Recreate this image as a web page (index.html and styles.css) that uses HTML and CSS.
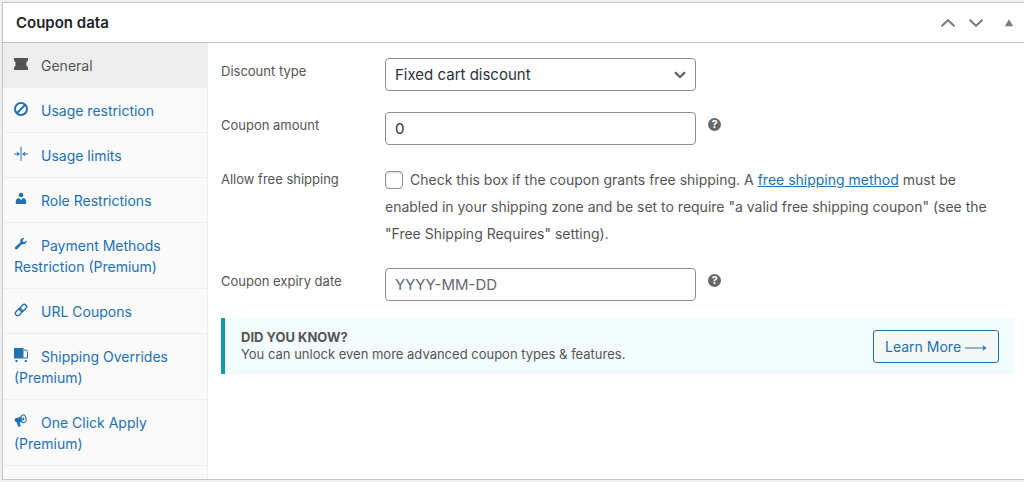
FILE: index.html
```html
<!DOCTYPE html>
<html lang="en">
<head>
<meta charset="utf-8">
<title>Coupon data</title>
<link rel="stylesheet" href="styles.css">
</head>
<body>
<section class="postbox">
  <header class="postbox-header">
    <h2 class="title">Coupon data</h2>
    <div class="actions">
      <button class="action" type="button" aria-label="Move up"><svg width="16" height="10" viewBox="0 0 16 10"><path class="chevron" d="M1.500 8.200 8 2.200l6.500 6"/></svg></button>
      <button class="action" type="button" aria-label="Move down"><svg width="16" height="10" viewBox="0 0 16 10"><path class="chevron" d="M1.500 1.800 8 7.800l6.500-6"/></svg></button>
      <button class="action toggle" type="button" aria-label="Toggle panel"><svg width="10" height="8" viewBox="0 0 10 8"><path fill="currentColor" d="M5 .2 9.200 7.200H.8z"/></svg></button>
    </div>
  </header>
  <div class="panel">
    <nav class="tabs">
      <a class="tab active" href="#general"><svg class="icon" viewBox="0 0 14 14"><path fill="currentColor" d="M0 1h14v2.800c-1 .4-1.700 1.700-1.700 3.200s.7 2.800 1.700 3.200V13H0v-2.800C1 9.800 1.700 8.500 1.700 7S1 4.200 0 3.800z"/></svg>General</a>
      <a class="tab" href="#restriction"><svg class="icon" viewBox="0 0 14 14"><circle cx="7" cy="7" r="6" fill="none" stroke="currentColor" stroke-width="2"/><path d="m3 11 8-8" stroke="currentColor" stroke-width="2"/></svg>Usage restriction</a>
      <a class="tab" href="#limits"><svg class="icon" viewBox="0 0 14 14"><path fill="none" stroke="currentColor" d="M7 0v14M0 7h5M9 7h5"/><path fill="currentColor" d="M2.500 4.500 6 7 2.500 9.500 3.500 7zM11.500 4.500 8 7l3.500 2.500-1-2.500z"/></svg>Usage limits</a>
      <a class="tab" href="#roles"><svg class="icon" viewBox="0 0 14 14"><circle cx="7" cy="3" r="2.300" fill="currentColor"/><path fill="currentColor" d="M1.800 12V9.500C1.800 7.500 3.300 6.200 5 6.100L7 8l2-1.900c1.700.1 3.200 1.400 3.200 3.400V12z"/></svg>Role Restrictions</a>
      <a class="tab" href="#payment"><svg class="icon" viewBox="0 0 14 14"><path fill="currentColor" d="M12.700 3.200 10.400 5.100 8.900 4.800 8.700 3.300 10.500 1C8.400.5 6.300 1.800 6.200 3.900c0 .5.1.9.2 1.300L1.300 9.900c-.7.6-.7 1.500-.1 2.100s1.500.5 2.100-.1L8 6.900c2.600.9 4.900-.8 4.700-3.700z"/></svg>Payment Methods Restriction (Premium)</a>
      <a class="tab" href="#url"><svg class="icon" viewBox="0 0 14 14"><g fill="none" stroke="currentColor" stroke-width="1.400"><rect x="5.200" y="2.500" width="7.800" height="4.600" rx="2.200" transform="rotate(-45 9.200 4.800)"/><rect x="1" y="6.900" width="7.800" height="4.600" rx="2.200" transform="rotate(-45 4.800 9.200)"/></g></svg>URL Coupons</a>
      <a class="tab" href="#shipping"><svg class="icon" viewBox="0 0 14 14"><path fill="currentColor" d="M0 0h9.500v10.500H0z"/><path fill="none" stroke="currentColor" d="M9.500 2h2.700l1.300 1.800V10h-4"/><path fill="currentColor" d="M1.500 12h2v2h-2zM10.800 12h2v2h-2z"/></svg>Shipping Overrides (Premium)</a>
      <a class="tab" href="#oneclick"><svg class="icon" viewBox="0 0 14 14"><path fill="currentColor" d="M8.300 1 5.500 3.300 2.200 4C.8 4.400.4 5.500.8 6.800c.3 1 1 1.500 1.900 1.400l1.500 4.600 2.700-.3-1.300-4.200h3.900z"/><ellipse cx="9.600" cy="4.800" rx="2.400" ry="4" fill="#fafafa" stroke="currentColor" transform="rotate(-12 9.600 4.800)"/><ellipse cx="9.300" cy="4.800" rx="1" ry="1.600" fill="currentColor"/></svg>One Click Apply (Premium)</a>
    </nav>
    <form class="options">
      <div class="field">
        <label class="label" for="type">Discount type</label>
        <div class="select-wrap">
          <select class="control" id="type"><option>Fixed cart discount</option></select>
          <svg class="select-arrow" width="12" height="8" viewBox="0 0 12 8"><path d="M1 1.200 6 6.200l5-5" fill="none" stroke="currentColor" stroke-width="2"/></svg>
        </div>
      </div>
      <div class="field">
        <label class="label" for="amount">Coupon amount</label>
        <input class="control" id="amount" type="text" value="0">
        <span class="help" role="img" aria-label="Help">?</span>
      </div>
      <div class="field">
        <label class="label" for="free">Allow free shipping</label>
        <p class="description"><input class="check" id="free" type="checkbox">Check this box if the coupon grants free shipping. A <a class="link" href="#method">free shipping method</a> must be enabled in your shipping zone and be set to require "a valid free shipping coupon" (see the "Free Shipping Requires" setting).</p>
      </div>
      <div class="field">
        <label class="label" for="expiry">Coupon expiry date</label>
        <input class="control" id="expiry" type="text" placeholder="YYYY-MM-DD">
        <span class="help" role="img" aria-label="Help">?</span>
      </div>
      <aside class="notice">
        <div class="notice-text"><strong class="notice-title">DID YOU KNOW?</strong><span>You can unlock even more advanced coupon types &amp; features.</span></div>
        <a class="button" href="#learn">Learn More <svg width="22" height="8" viewBox="0 0 22 8"><path d="M0 4h20" stroke="currentColor"/><path d="m17.500 1 4 3-4 3 1-3z" fill="currentColor"/></svg></a>
      </aside>
    </form>
  </div>
</section>
</body>
</html>
```
FILE: styles.css
```css
* { box-sizing: border-box; }
body {
  margin: 0;
  padding: 2px 0 2px 2px;
  background: #f0f0f1;
  color: #555;
  font: 14px/22px Inter, "Liberation Sans", sans-serif;
}
.postbox {
  display: flex;
  flex-direction: column;
  min-height: calc(100vh - 4px);
  background: #fff;
  border: 1px solid #c3c4c7;
  border-right: 0;
}
.postbox-header {
  display: flex;
  align-items: center;
  justify-content: space-between;
  height: 40px;
  padding: 0 10px 0 13px;
  border-bottom: 1px solid #c3c4c7;
}
.title { margin: 0; color: #1d2327; font-size: 15px; font-weight: 600; }
.actions { display: flex; align-items: center; gap: 12px; color: #787c82; }
.action { display: flex; padding: 0; border: 0; background: none; color: inherit; }
.toggle { margin-left: 8px; }
.chevron { fill: none; stroke: currentColor; stroke-width: 2; }
.panel { display: flex; flex: 1; }
.tabs {
  flex: 0 0 205px;
  background: #fafafa;
  border-right: 1px solid #eee;
}
.tab {
  display: block;
  padding: 12px 11px 11px;
  border-bottom: 1px solid #eee;
  color: #2271b1;
  line-height: 21px;
  text-decoration: none;
}
.tab.active { background: #eee; color: #555; }
.icon { width: 14px; height: 14px; margin-right: 13px; }
.options { flex: 1; min-width: 0; padding: 15px 9px 16px 13px; }
.field { display: flex; margin-bottom: 21px; }
.label { flex: 0 0 164px; padding-top: 2px; font-size: 13px; }
.select-wrap { position: relative; display: flex; }
.control {
  width: 311px;
  height: 33px;
  padding: 0 9px;
  border: 1px solid #8c8f94;
  border-radius: 4px;
  background: #fff;
  color: #2c3338;
  font: 15px Inter, "Liberation Sans", sans-serif;
  appearance: none;
}
.control::placeholder { color: #646970; opacity: 1; }
.select-arrow { position: absolute; right: 10px; top: 13px; pointer-events: none; }
.help {
  width: 13px;
  height: 13px;
  margin: 6px 0 0 12px;
  border-radius: 50%;
  background: #666;
  color: #fff;
  font-size: 11px;
  font-weight: 700;
  line-height: 13px;
  text-align: center;
}
.description { margin: 0; padding-right: 20px; line-height: 27px; }
.check {
  width: 18px;
  height: 18px;
  margin: 0 7px 0 0;
  border: 1px solid #8c8f94;
  border-radius: 4px;
  background: #fff;
  box-shadow: inset 0 1px 2px #ddd;
  vertical-align: -4px;
  appearance: none;
}
.link { color: #2271b1; }
.notice {
  display: flex;
  align-items: center;
  justify-content: space-between;
  margin-top: -4px;
  padding: 11px 16px 11px 16px;
  border-left: 4px solid #1597a5;
  background: #f3fcfc;
}
.notice-text { display: flex; flex-direction: column; font-size: 13px; line-height: 17px; }
.button {
  padding: 5px 11px;
  border: 1px solid #2271b1;
  border-radius: 3px;
  background: #f6f7f7;
  color: #2271b1;
  line-height: 21px;
  text-decoration: none;
  white-space: nowrap;
}
```
